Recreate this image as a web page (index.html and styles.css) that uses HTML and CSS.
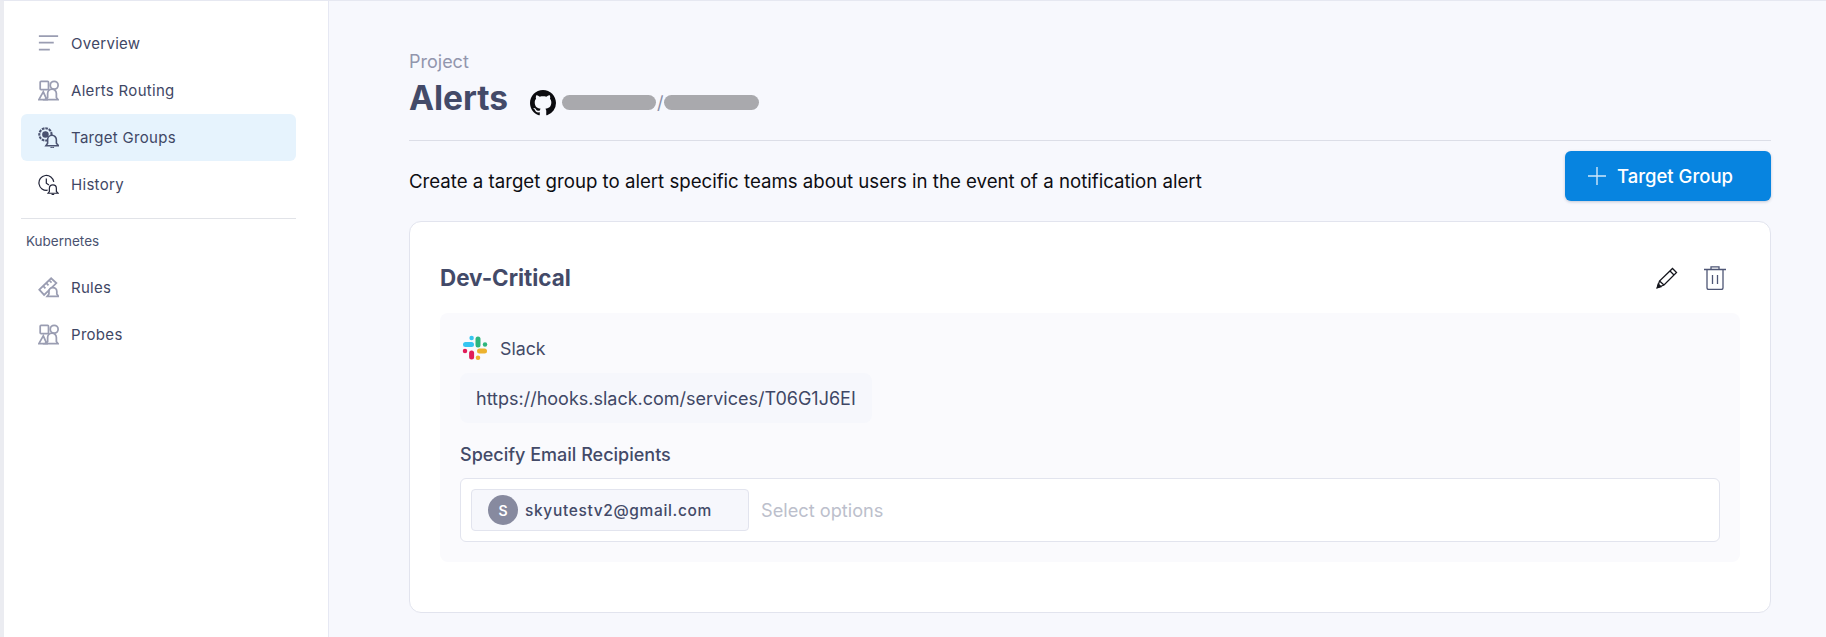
FILE: index.html
```html
<!DOCTYPE html>
<html lang="en">
<head>
<meta charset="utf-8">
<title>Alerts</title>
<link rel="stylesheet" href="styles.css">
</head>
<body>
<div class="app">
  <aside class="sidebar">
    <nav class="nav">
      <a class="nav-item">
        <svg class="nav-icon" viewBox="0 0 24 24" fill="none" stroke="#9a9db2" stroke-width="1.800"><path d="M1 3.600h22M1 11h17M1 19h12.500"/></svg>
        <span>Overview</span>
      </a>
      <a class="nav-item">
        <svg class="nav-icon" viewBox="0 0 24 24" fill="none" stroke="#9a9db2" stroke-width="2"><rect x="2.500" y="1.500" width="9.500" height="9.500" rx="1"/><circle cx="18.500" cy="6" r="4.500"/><path d="M6 13.500 1 22.500h9z"/><path d="M8 22.500h15l-2-2.500v-4.500a5 5 0 0 0-10 0V20z" fill="#fff"/></svg>
        <span>Alerts Routing</span>
      </a>
      <a class="nav-item active">
        <svg class="nav-icon" viewBox="0 0 24 24" fill="none" stroke="#4a5270"><circle cx="8.500" cy="8.500" r="7" stroke-width="2.400" stroke-dasharray="3 1"/><circle cx="8.500" cy="8.500" r="3" fill="#4a5270" stroke-width="1.500"/><path d="M9 21.500h14.500l-2.500-3v-4a5 5 0 0 0-10 0v4z" fill="#e6f3fd" stroke-width="1.800"/><path d="M14.500 23a2.200 2.200 0 0 0 3.500 0" stroke-width="1.500"/></svg>
        <span>Target Groups</span>
      </a>
      <a class="nav-item">
        <svg class="nav-icon" viewBox="0 0 24 24" fill="none" stroke="#23263a" stroke-width="1.400"><path d="M11 18.500A8.500 8.500 0 1 1 18 9"/><path d="M9.500 5v5.500l3 2"/><path d="M11.500 22h11.500l-2-2v-3.500a4 4 0 0 0-8 0V20z" fill="#fff"/><path d="M15.500 23.500h3"/></svg>
        <span>History</span>
      </a>
    </nav>
    <hr class="side-rule">
    <div class="side-heading">Kubernetes</div>
    <nav class="nav">
      <a class="nav-item">
        <svg class="nav-icon" viewBox="0 0 24 24" fill="none" stroke="#9a9db2" stroke-width="2"><path d="M1.500 14.500 15 1.500l6 5.500L7 20.500z"/><path d="m6 10.500 2.500 2.500M9.500 7l2.500 2.500M13 4l2.500 2.500"/><path d="M10.500 22h13l-2-2.500v-3a4.500 4.500 0 0 0-9 0v3z" fill="#fff"/></svg>
        <span>Rules</span>
      </a>
      <a class="nav-item">
        <svg class="nav-icon" viewBox="0 0 24 24" fill="none" stroke="#9a9db2" stroke-width="2"><rect x="2.500" y="1.500" width="9.500" height="9.500" rx="1"/><circle cx="18.500" cy="6" r="4.500"/><path d="M6 13.500 1 22.500h9z"/><path d="M8 22.500h15l-2-2.500v-4.500a5 5 0 0 0-10 0V20z" fill="#fff"/></svg>
        <span>Probes</span>
      </a>
    </nav>
  </aside>
  <main class="main">
    <div class="eyebrow">Project</div>
    <div class="title-row">
      <h1 class="title">Alerts</h1>
      <svg class="gh" viewBox="0 0 16 16" fill="#0b0b0f"><path d="M8 0C3.580 0 0 3.580 0 8c0 3.540 2.290 6.530 5.470 7.590.4.070.55-.17.55-.38 0-.19-.01-.82-.01-1.490-2.010.37-2.530-.49-2.690-.94-.09-.23-.48-.94-.82-1.130-.28-.15-.68-.52-.01-.53.63-.01 1.080.58 1.230.82.720 1.210 1.870.87 2.330.66.070-.52.280-.87.510-1.070-1.780-.2-3.640-.89-3.640-3.950 0-.87.310-1.590.820-2.150-.08-.2-.36-1.020.08-2.120 0 0 .67-.21 2.200.82.640-.18 1.320-.27 2-.27s1.360.09 2 .27c1.530-1.040 2.200-.82 2.200-.82.440 1.100.16 1.920.08 2.120.51.560.82 1.270.82 2.150 0 3.070-1.870 3.750-3.650 3.950.290.250.540.730.540 1.480 0 1.070-.01 1.930-.01 2.200 0 .21.150.460.550.380A8.010 8.010 0 0 0 16 8c0-4.420-3.580-8-8-8z"/></svg>
      <div class="repo">
        <span class="redact redact-a"></span>
        <span class="slash">/</span>
        <span class="redact redact-b"></span>
      </div>
    </div>
    <hr class="main-rule">
    <div class="intro-row">
      <p class="intro">Create a target group to alert specific teams about users in the event of a notification alert</p>
      <button class="add-btn">
        <svg class="plus" viewBox="0 0 18 18" fill="none" stroke="#cfe7fa" stroke-width="1.400"><path d="M9 0v18M0 9h18"/></svg>
        <span>Target Group</span>
      </button>
    </div>
    <section class="card">
      <header class="card-head">
        <h2 class="card-title">Dev-Critical</h2>
        <div class="card-actions">
          <svg class="edit" viewBox="0 0 22 22" fill="none" stroke="#14151c" stroke-width="1.300"><path d="M1.500 20.500 3.500 14 16.500 1.500 20.500 5.500 8 18z"/><path d="m14 4 4 4M3.500 14 8 18"/><path d="M1.200 20.800 2.300 17l2.600 2.700z" fill="#14151c"/></svg>
          <svg class="trash" viewBox="0 0 22 24" fill="none" stroke="#4e5675" stroke-width="1.300"><path d="M0 3.500h22M7 3.500V.8h8v2.700M3 3.500v18.300c0 1 .7 1.700 1.700 1.700h12.600c1 0 1.700-.7 1.700-1.700V3.500M8.500 9v9M13.500 9v9"/></svg>
        </div>
      </header>
      <div class="panel">
        <div class="slack-row">
          <svg class="slack" viewBox="0 0 26 26" fill="none" stroke-linecap="round" stroke-width="5">
            <path d="M9.600 3v0" stroke="#36c5f0" stroke-width="4.500"/><path d="M3.500 9.500h6" stroke="#36c5f0"/>
            <path d="M16 4v6" stroke="#2eb67d"/><path d="M23 9.500v0" stroke="#2eb67d" stroke-width="4.500"/>
            <path d="M17.500 16h5" stroke="#ecb22e"/><path d="M16 22.700v0" stroke="#ecb22e" stroke-width="4.500"/>
            <path d="M9.600 18v4" stroke="#e01e5a"/><path d="M3 16v0" stroke="#e01e5a" stroke-width="4.500"/>
          </svg>
          <span>Slack</span>
        </div>
        <div class="url">https://hooks.slack.com/services/T06G1J6EI</div>
        <div class="field-label">Specify Email Recipients</div>
        <div class="select">
          <div class="chip">
            <span class="avatar">S</span>
            <span class="chip-text">skyutestv2@gmail.com</span>
          </div>
          <span class="placeholder">Select options</span>
        </div>
      </div>
    </section>
  </main>
</div>
</body>
</html>
```
FILE: styles.css
```css
* { box-sizing: border-box; }
html, body { margin: 0; padding: 0; height: 100%; }
body {
  font-family: Inter, "Noto Sans", "Liberation Sans", sans-serif;
  color: #3f4765;
  background: #f7f8fd;
  overflow: hidden;
}
.app {
  display: flex;
  height: 637px;
  border-top: 1px solid #e6e8f1;
  border-left: 4px solid #ebecf1;
}
.sidebar {
  width: 325px;
  flex: none;
  background: #fff;
  border-right: 1px solid #e6e8f3;
  padding: 19px 32px 0 17px;
}
.nav { display: flex; flex-direction: column; }
.nav-item {
  display: flex;
  align-items: center;
  height: 47px;
  padding-left: 17px;
  border-radius: 6px;
  font-size: 15px;
  letter-spacing: .3px;
  color: #3f4765;
}
.nav-item.active { background: #e6f3fd; }
.nav-icon { width: 21px; height: 21px; margin-right: 12px; flex: none; }
.side-rule { margin: 10px 0 0; border: 0; border-top: 1px solid #e1e3e8; }
.side-heading {
  padding: 14px 0 14px 5px;
  font-size: 13.500px;
  line-height: 17px;
  color: #4a5270;
}
.main { flex: 1; min-width: 0; padding: 51px 55px 0 80px; }
.eyebrow { font-size: 18px; line-height: 20px; color: #9296ad; }
.title-row { display: flex; align-items: center; height: 48px; margin-top: 2px; }
.title { margin: 0; font-size: 33.500px; line-height: 40px; font-weight: 700; color: #434a68; }
.gh { width: 26px; height: 26px; margin: 10px 6px 0 22px; flex: none; }
.repo { display: flex; align-items: center; margin-top: 9px; }
.redact { display: block; height: 15px; border-radius: 8px; background: #a9a9ad; }
.redact-a { width: 94px; }
.redact-b { width: 95px; }
.slash { width: 8px; font-size: 18px; line-height: 15px; color: #8b90a8; text-align: center; }
.main-rule { margin: 18px 0 0; border: 0; border-top: 1px solid #dcdee7; }
.intro-row { display: flex; align-items: center; justify-content: space-between; padding-top: 10px; }
.intro { margin: 10px 0 0; font-size: 18.650px; color: #0d0d12; }
.add-btn {
  display: flex;
  align-items: center;
  width: 206px;
  height: 50px;
  padding: 0 0 0 23px;
  border: 0;
  border-radius: 6px;
  background: #0784e0;
  box-shadow: 0 1px 3px rgba(30, 50, 90, .25);
  color: #fff;
  font: 500 18.500px Inter, sans-serif;
}
.plus { width: 18px; height: 18px; margin-right: 11px; }
.card {
  margin-top: 20px;
  height: 392px;
  padding: 0 30px;
  background: #fff;
  border: 1px solid #e2e4ee;
  border-radius: 12px;
}
.card-head { display: flex; align-items: center; justify-content: space-between; height: 91px; padding: 20px 14px 0 0; }
.card-title { margin: 0; font-size: 22.400px; font-weight: 700; color: #434a68; }
.card-actions { display: flex; align-items: center; gap: 26px; }
.edit { width: 22px; height: 22px; }
.trash { width: 22px; height: 24px; }
.panel { height: 249px; padding: 22px 20px 0; background: #fafafd; border-radius: 8px; }
.slack-row { display: flex; align-items: center; height: 26px; padding-left: 2px; font-size: 17.800px; color: #434a68; }
.slack { width: 26px; height: 26px; margin-right: 12px; flex: none; }
.url {
  display: flex;
  align-items: center;
  width: 412px;
  height: 50px;
  margin-top: 12px;
  padding-left: 16px;
  border-radius: 8px;
  background: #f6f7fc;
  font-size: 18px;
  white-space: nowrap;
  overflow: hidden;
}
.field-label { margin-top: 20px; font-size: 18px; line-height: 24px; font-weight: 500; color: #434a68; }
.select {
  display: flex;
  align-items: center;
  gap: 12px;
  height: 64px;
  margin-top: 11px;
  padding-left: 10px;
  background: #fff;
  border: 1px solid #e2e4ee;
  border-radius: 6px;
}
.chip {
  display: flex;
  align-items: center;
  gap: 7px;
  width: 278px;
  height: 42px;
  padding-left: 16px;
  background: #f6f7fc;
  border: 1px solid #e2e4ee;
  border-radius: 4px;
}
.avatar {
  display: flex;
  align-items: center;
  justify-content: center;
  width: 30px;
  height: 30px;
  flex: none;
  border-radius: 50%;
  background: #878a9f;
  color: #fff;
  font-size: 14px;
  font-weight: 600;
}
.chip-text { font-size: 15.500px; font-weight: 500; letter-spacing: .65px; color: #434a68; }
.placeholder { font-size: 18.200px; color: #bcbfcc; }
```
